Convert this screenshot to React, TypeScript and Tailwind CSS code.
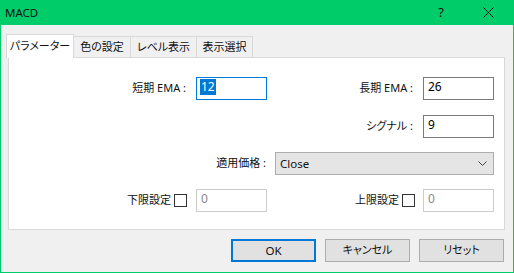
import React from "react";

const FONT = "font-['Noto_Sans','Noto_Sans_CJK_JP',sans-serif] [font-feature-settings:'palt']";

function TextBox({ value, focused, disabled, selected }: { value: string; focused?: boolean; disabled?: boolean; selected?: boolean }) {
  const border = focused ? "border-[#0078d7]" : disabled ? "border-[#cccccc]" : "border-[#7a7a7a]";
  return (
    <div className={`w-[71px] h-[23px] bg-white border ${border} flex items-start pl-[3px] pt-[1px]`}>
      {selected ? (
        <span className="bg-[#0078d7] text-white leading-[16px] h-[16px] px-px text-[12px]">{value}</span>
      ) : (
        <span className={`${disabled ? "text-[#8a8a8a]" : "text-black"} leading-[16px] px-px text-[12px]`}>{value}</span>
      )}
    </div>
  );
}

function Check() {
  return <div className="w-[13px] h-[13px] border border-[#333333] bg-white" />;
}

export default function App() {
  return (
    <div className={`${FONT} text-[11px] text-[#111] w-[514px] h-[273px] bg-[#f0f0f0] border border-t-0 border-[#00cc6a] flex flex-col`}>
      {/* Title bar */}
      <div className="h-[25px] bg-[#00cc6a] flex items-center pl-[4px]">
        <span className="leading-none text-[11.5px]">MACD</span>
        <span className="ml-auto mr-[39px] text-[13px] leading-none">?</span>
        <svg width="11" height="11" viewBox="0 0 11 11" className="mr-[19px]">
          <path d="M0.5 0.5 L10.5 10.5 M10.5 0.5 L0.5 10.5" stroke="#000" strokeWidth="1" fill="none" />
        </svg>
      </div>

      {/* Tabs */}
      <div className="mt-[9px] ml-[5px] h-[23px] flex items-end relative z-10">
        <div className="w-[68px] h-[24px] -mb-px bg-white border border-b-0 border-[#d9d9d9] flex items-center justify-center">
          パラメーター
        </div>
        <div className="w-[57px] h-[21px] border-t border-r border-[#d9d9d9] flex items-center justify-center">色の設定</div>
        <div className="w-[66px] h-[21px] border-t border-r border-[#d9d9d9] flex items-center justify-center">レベル表示</div>
        <div className="w-[56px] h-[21px] border-t border-r border-[#d9d9d9] flex items-center justify-center">表示選択</div>
      </div>

      {/* Panel */}
      <div className="ml-[7px] w-[497px] h-[173px] bg-white border border-[#d9d9d9] pt-[19px] flex flex-col">
        <div className="flex h-[23px]">
          <div className="w-[187px] flex justify-end items-center pr-[10px]">短期 EMA :</div>
          <TextBox value="12" focused selected />
          <div className="w-[156px] flex justify-end items-center pr-[10px]">長期 EMA :</div>
          <TextBox value="26" />
        </div>
        <div className="flex h-[23px] mt-[15px]">
          <div className="w-[414px] flex justify-end items-center pr-[10px]">シグナル :</div>
          <TextBox value="9" />
        </div>
        <div className="flex h-[23px] mt-[14px]">
          <div className="w-[266px] flex justify-end items-center pr-[9px]">適用価格 :</div>
          <div className="w-[219px] h-[23px] bg-[#e5e5e5] border border-[#adadad] flex items-center pl-[4px] pr-[6px]">
            <span className="text-[11.5px]">Close</span>
            <svg width="9" height="5" viewBox="0 0 9 5" className="ml-auto">
              <path d="M0.5 0.5 L4.5 4.5 L8.5 0.5" stroke="#444" strokeWidth="1" fill="none" />
            </svg>
          </div>
        </div>
        <div className="flex h-[23px] mt-[14px]">
          <div className="w-[187px] flex justify-end items-center gap-[3px] pr-[9px]">
            <span>下限設定</span>
            <Check />
          </div>
          <TextBox value="0" disabled />
          <div className="w-[156px] flex justify-end items-center gap-[3px] pr-[8px]">
            <span>上限設定</span>
            <Check />
          </div>
          <TextBox value="0" disabled />
        </div>
      </div>

      {/* Buttons */}
      <div className="mt-[9px] flex justify-end gap-[9px] pr-[9px]">
        <div className="w-[85px] h-[23px] bg-[#e1e1e1] border-2 border-[#0078d7] flex items-center justify-center text-[11.5px]">OK</div>
        <div className="w-[85px] h-[23px] bg-[#e1e1e1] border border-[#adadad] flex items-center justify-center">キャンセル</div>
        <div className="w-[85px] h-[23px] bg-[#e1e1e1] border border-[#adadad] flex items-center justify-center">リセット</div>
      </div>
    </div>
  );
}
